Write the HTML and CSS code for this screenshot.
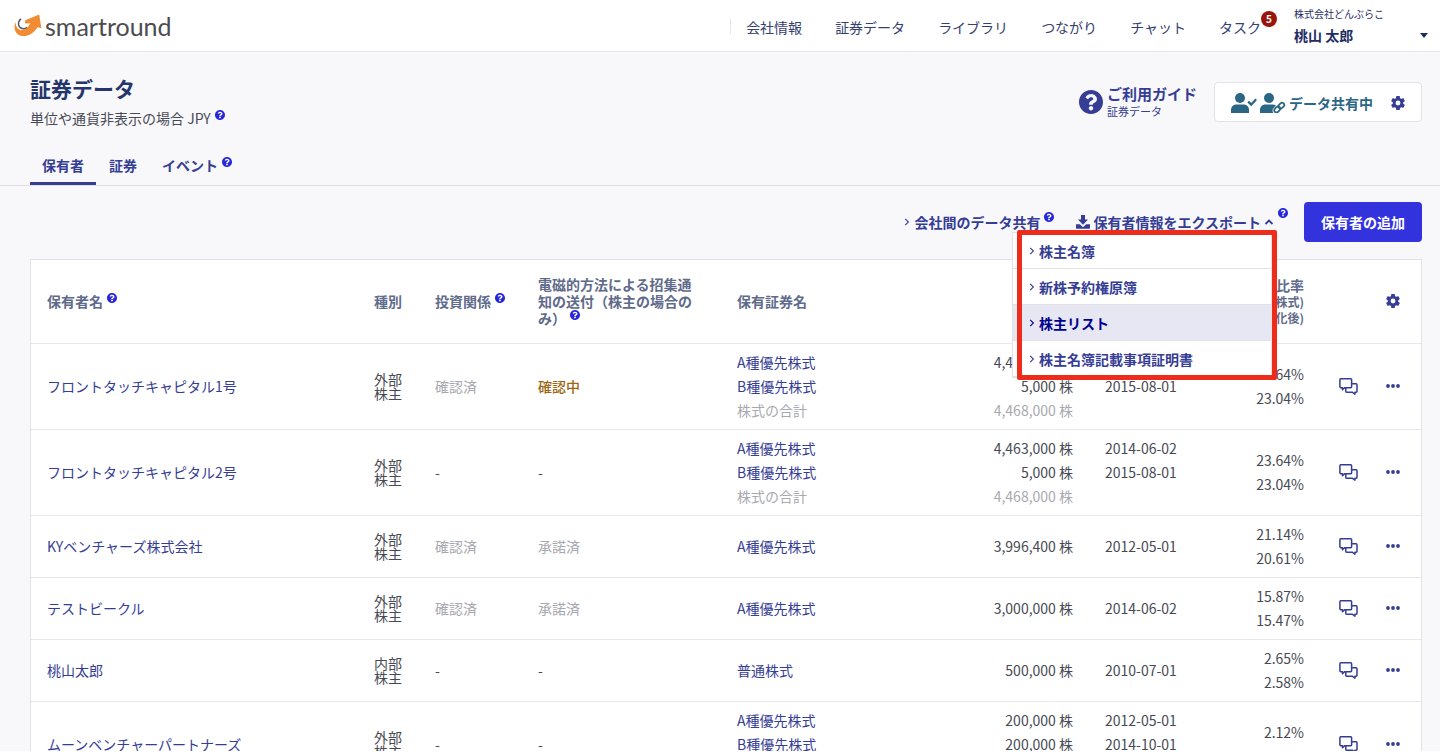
FILE: index.html
```html
<!doctype html>
<html lang="ja">
<head>
    <meta charset="utf-8">
    <title>証券データ | smartround</title>
    <meta name="viewport" content="width=device-width, initial-scale=1">
    <link rel="stylesheet" href="styles.css">
</head>
<body>
<svg class="sprite" xmlns="http://www.w3.org/2000/svg">
    <symbol id="i-help" viewBox="8 8 496 496">
        <path d="M504 256c0 136.997-111.043 248-248 248S8 392.997 8 256C8 119.083 119.043 8 256 8s248 111.083 248 248zM262.655 90c-54.497 0-89.255 22.957-116.549 63.758-3.536 5.286-2.353 12.415 2.715 16.258l34.699 26.31c5.205 3.947 12.621 3.008 16.665-2.122 17.864-22.658 30.113-35.797 57.303-35.797 20.429 0 45.698 13.148 45.698 32.958 0 14.976-12.363 22.667-32.534 33.976C247.128 238.528 216 254.941 216 296v4c0 6.627 5.373 12 12 12h56c6.627 0 12-5.373 12-12v-1.333c0-28.462 83.186-29.647 83.186-106.667 0-58.002-60.165-102-116.531-102zM256 338c-25.365 0-46 20.635-46 46 0 25.364 20.635 46 46 46s46-20.636 46-46c0-25.365-20.635-46-46-46z"/>
    </symbol>
    <symbol id="i-cog" viewBox="2 2 20 20">
        <path d="M12 15.5A3.5 3.5 0 0 1 8.5 12 3.5 3.5 0 0 1 12 8.5 3.5 3.5 0 0 1 15.5 12 3.5 3.5 0 0 1 12 15.5M19.43 12.97C19.47 12.65 19.5 12.33 19.5 12 19.5 11.67 19.47 11.34 19.43 11L21.54 9.37C21.73 9.22 21.78 8.95 21.66 8.73L19.66 5.27C19.54 5.05 19.27 4.96 19.05 5.05L16.56 6.05C16.04 5.66 15.5 5.32 14.87 5.07L14.5 2.42C14.46 2.18 14.25 2 14 2H10C9.75 2 9.54 2.18 9.5 2.42L9.13 5.07C8.5 5.32 7.96 5.66 7.44 6.05L4.95 5.05C4.73 4.96 4.46 5.05 4.34 5.27L2.34 8.73C2.21 8.95 2.27 9.22 2.46 9.37L4.57 11C4.53 11.34 4.5 11.67 4.5 12 4.5 12.33 4.53 12.65 4.57 12.97L2.46 14.63C2.27 14.78 2.21 15.05 2.34 15.27L4.34 18.73C4.46 18.95 4.73 19.03 4.95 18.95L7.44 17.94C7.96 18.34 8.5 18.68 9.13 18.93L9.5 21.58C9.54 21.82 9.75 22 10 22H14C14.25 22 14.46 21.82 14.5 21.58L14.87 18.93C15.5 18.67 16.04 18.34 16.56 17.94L19.05 18.95C19.27 19.03 19.54 18.95 19.66 18.73L21.66 15.27C21.78 15.05 21.73 14.78 21.54 14.63L19.43 12.97Z"/>
    </symbol>
    <symbol id="i-right" viewBox="0 0 6 8">
        <path d="M1.2 .8 4.4 4 1.2 7.2" fill="none" stroke="currentColor" stroke-width="1.1"/>
    </symbol>
    <symbol id="i-up" viewBox="0 0 10 6">
        <path d="M1.5 5 5 1.6 8.5 5" fill="none" stroke="currentColor" stroke-width="1.8"/>
    </symbol>
    <symbol id="i-download" viewBox="0 0 14 14">
        <path d="M5 0h4v4.600h3L7 9.800 2 4.600h3zM0 9.200h3.800L7 12.200l3.200-3H14V13a.8.8 0 0 1-.8.800H.8A.8.8 0 0 1 0 13z"/>
    </symbol>
    <symbol id="i-user-check" viewBox="0 0 26 20">
        <circle cx="9" cy="5" r="5"/>
        <path d="M0 20v-3.200c0-3.200 2.400-5.400 5.400-5.400h7.200c3 0 5.400 2.200 5.400 5.400V20z"/>
        <path d="m17.200 8.600 3 3 5-5.400" fill="none" stroke="currentColor" stroke-width="2.200"/>
    </symbol>
    <symbol id="i-user-link" viewBox="0 0 26 20">
        <circle cx="9" cy="5" r="5"/>
        <path d="M0 20v-3.200c0-3.200 2.400-5.400 5.400-5.400h7.200c1.300 0 2.400.4 3.300 1.100L13.600 15c-1.500 1.600-1.300 3.600-.2 5z"/>
        <g fill="none" stroke="currentColor" stroke-width="1.800">
            <rect x="14" y="14.300" width="6.400" height="4.400" rx="2.200" transform="rotate(-45 17.200 16.500)"/>
            <rect x="18.100" y="10.500" width="6.400" height="4.400" rx="2.200" transform="rotate(-45 21.300 12.700)"/>
        </g>
    </symbol>
    <symbol id="i-chat" viewBox="0 0 20 18">
        <g fill="none" stroke="currentColor" stroke-width="1.600" stroke-linejoin="round">
            <path d="M7 10.200H6L3.600 12.400V10.200H1.800a.9.900 0 0 1-.9-.9V1.800c0-.5.4-.9.900-.9h10.600c.5 0 .9.400.9.900v4.400"/>
            <path d="M13.300 6.200h4.800c.5 0 .9.400.9.900v7c0 .5-.4.900-.9.900h-1.300v2.200L14 15H8a.9.900 0 0 1-.9-.9v-3.900h5.300c.5 0 .9-.4.900-.9z"/>
        </g>
    </symbol>
    <symbol id="i-dots" viewBox="0 0 14 4">
        <circle cx="2" cy="2" r="1.900"/>
        <circle cx="7" cy="2" r="1.900"/>
        <circle cx="12" cy="2" r="1.900"/>
    </symbol>
</svg>

<div class="app">
    <header class="header">
        <a class="logo" href="#">
            <svg width="28" height="24" viewBox="0 0 28 24">
                <path d="M7 4.800C4.400 6.600 3.600 10.200 5.600 13c2 2.400 5.400 2.200 7.600.4" fill="none" stroke="#555" stroke-width="1.500"/>
                <path d="M1.600 8C-.8 13.600.8 20 6.600 21.800c6.600 1.400 13.400-2.600 17-8.600l3.800 1L25.200.6 11.200 6.200l-.2 3.400 5.200-.4c-2 4.200-5.800 7.400-9.600 6.800C3.400 15.400 1.600 12 1.600 8z" fill="#f28c33"/>
            </svg>
            <span>smartround</span>
        </a>
        <nav class="nav">
            <a href="#">会社情報</a>
            <a href="#">証券データ</a>
            <a href="#">ライブラリ</a>
            <a href="#">つながり</a>
            <a href="#">チャット</a>
            <a href="#">タスク<span class="badge">5</span></a>
        </nav>
        <button class="account" type="button">
            <span class="account-text">
                <span class="account-company">株式会社どんぶらこ</span>
                <span class="account-name">桃山 太郎</span>
            </span>
            <span class="account-caret"></span>
        </button>
    </header>

    <section class="page-head">
        <div class="page-title">
            <h1>証券データ</h1>
            <p>単位や通貨非表示の場合 JPY<svg class="help"><use href="#i-help"/></svg></p>
        </div>
        <a class="guide" href="#">
            <svg width="24" height="24"><use href="#i-help"/></svg>
            <span>
                <strong>ご利用ガイド</strong>
                <small>証券データ</small>
            </span>
        </a>
        <button class="share" type="button">
            <svg width="26" height="20"><use href="#i-user-check"/></svg>
            <svg width="26" height="20"><use href="#i-user-link"/></svg>
            <span>データ共有中</span>
            <svg class="cog" width="14" height="14"><use href="#i-cog"/></svg>
        </button>
    </section>

    <nav class="tabs">
        <a class="active" href="#">保有者</a>
        <a href="#">証券</a>
        <a href="#">イベント<svg class="help"><use href="#i-help"/></svg></a>
    </nav>

    <main class="content">
        <div class="toolbar">
            <a class="tool" href="#"><svg class="chevron"><use href="#i-right"/></svg>会社間のデータ共有<svg class="help"><use href="#i-help"/></svg></a>
            <div class="export">
                <button class="tool" type="button"><svg class="download"><use href="#i-download"/></svg>保有者情報をエクスポート<svg class="caret-up"><use href="#i-up"/></svg></button>
                <svg class="help"><use href="#i-help"/></svg>
                <div class="menu">
                    <a href="#"><svg class="chevron"><use href="#i-right"/></svg>株主名簿</a>
                    <a href="#"><svg class="chevron"><use href="#i-right"/></svg>新株予約権原簿</a>
                    <a class="selected" href="#"><svg class="chevron"><use href="#i-right"/></svg>株主リスト</a>
                    <a href="#"><svg class="chevron"><use href="#i-right"/></svg>株主名簿記載事項証明書</a>
                    <div class="menu-frame"></div>
                </div>
            </div>
            <button class="primary" type="button">保有者の追加</button>
        </div>

        <table class="holders">
            <colgroup>
                <col>
                <col class="col-type">
                <col class="col-relation">
                <col class="col-notice">
                <col class="col-security">
                <col class="col-shares">
                <col class="col-date">
                <col class="col-ratio">
                <col class="col-chat">
                <col class="col-more">
            </colgroup>
            <thead>
            <tr>
                <th>保有者名<svg class="help"><use href="#i-help"/></svg></th>
                <th>種別</th>
                <th>投資関係<svg class="help"><use href="#i-help"/></svg></th>
                <th class="notice">電磁的方法による招集通知の送付（株主の場合のみ）<svg class="help"><use href="#i-help"/></svg></th>
                <th>保有証券名</th>
                <th class="num">保有数</th>
                <th>取得日</th>
                <th class="num">保有比率<small>(発行済株式)</small><small>(完全希薄化後)</small></th>
                <th></th>
                <th class="more"><button type="button" aria-label="表示設定"><svg width="14" height="14"><use href="#i-cog"/></svg></button></th>
            </tr>
            </thead>
            <tbody>
            <tr>
                <td><a href="#">フロントタッチキャピタル1号</a></td>
                <td class="type">外部株主</td>
                <td class="muted">確認済</td>
                <td class="pending">確認中</td>
                <td class="lines"><a href="#">A種優先株式</a><a href="#">B種優先株式</a><span class="muted">株式の合計</span></td>
                <td class="lines num"><span>4,463,000 株</span><span>5,000 株</span><span class="muted">4,468,000 株</span></td>
                <td class="lines top"><span>2014-06-02</span><span>2015-08-01</span></td>
                <td class="lines num"><span>23.64%</span><span>23.04%</span></td>
                <td class="chat"><button type="button" aria-label="チャット"><svg width="19" height="17"><use href="#i-chat"/></svg></button></td>
                <td class="more"><button type="button" aria-label="メニュー"><svg width="14" height="4"><use href="#i-dots"/></svg></button></td>
            </tr>
            <tr>
                <td><a href="#">フロントタッチキャピタル2号</a></td>
                <td class="type">外部株主</td>
                <td>-</td>
                <td>-</td>
                <td class="lines"><a href="#">A種優先株式</a><a href="#">B種優先株式</a><span class="muted">株式の合計</span></td>
                <td class="lines num"><span>4,463,000 株</span><span>5,000 株</span><span class="muted">4,468,000 株</span></td>
                <td class="lines top"><span>2014-06-02</span><span>2015-08-01</span></td>
                <td class="lines num"><span>23.64%</span><span>23.04%</span></td>
                <td class="chat"><button type="button" aria-label="チャット"><svg width="19" height="17"><use href="#i-chat"/></svg></button></td>
                <td class="more"><button type="button" aria-label="メニュー"><svg width="14" height="4"><use href="#i-dots"/></svg></button></td>
            </tr>
            <tr>
                <td><a href="#">KYベンチャーズ株式会社</a></td>
                <td class="type">外部株主</td>
                <td class="muted">確認済</td>
                <td class="muted">承諾済</td>
                <td class="lines"><a href="#">A種優先株式</a></td>
                <td class="lines num"><span>3,996,400 株</span></td>
                <td class="lines"><span>2012-05-01</span></td>
                <td class="lines num"><span>21.14%</span><span>20.61%</span></td>
                <td class="chat"><button type="button" aria-label="チャット"><svg width="19" height="17"><use href="#i-chat"/></svg></button></td>
                <td class="more"><button type="button" aria-label="メニュー"><svg width="14" height="4"><use href="#i-dots"/></svg></button></td>
            </tr>
            <tr>
                <td><a href="#">テストビークル</a></td>
                <td class="type">外部株主</td>
                <td class="muted">確認済</td>
                <td class="muted">承諾済</td>
                <td class="lines"><a href="#">A種優先株式</a></td>
                <td class="lines num"><span>3,000,000 株</span></td>
                <td class="lines"><span>2014-06-02</span></td>
                <td class="lines num"><span>15.87%</span><span>15.47%</span></td>
                <td class="chat"><button type="button" aria-label="チャット"><svg width="19" height="17"><use href="#i-chat"/></svg></button></td>
                <td class="more"><button type="button" aria-label="メニュー"><svg width="14" height="4"><use href="#i-dots"/></svg></button></td>
            </tr>
            <tr>
                <td><a href="#">桃山太郎</a></td>
                <td class="type">内部株主</td>
                <td>-</td>
                <td>-</td>
                <td class="lines"><a href="#">普通株式</a></td>
                <td class="lines num"><span>500,000 株</span></td>
                <td class="lines"><span>2010-07-01</span></td>
                <td class="lines num"><span>2.65%</span><span>2.58%</span></td>
                <td class="chat"><button type="button" aria-label="チャット"><svg width="19" height="17"><use href="#i-chat"/></svg></button></td>
                <td class="more"><button type="button" aria-label="メニュー"><svg width="14" height="4"><use href="#i-dots"/></svg></button></td>
            </tr>
            <tr>
                <td><a href="#">ムーンベンチャーパートナーズ</a></td>
                <td class="type">外部株主</td>
                <td>-</td>
                <td>-</td>
                <td class="lines"><a href="#">A種優先株式</a><a href="#">B種優先株式</a><span class="muted">株式の合計</span></td>
                <td class="lines num"><span>200,000 株</span><span>200,000 株</span><span class="muted">400,000 株</span></td>
                <td class="lines top"><span>2012-05-01</span><span>2014-10-01</span></td>
                <td class="lines num"><span>2.12%</span><span>2.06%</span></td>
                <td class="chat"><button type="button" aria-label="チャット"><svg width="19" height="17"><use href="#i-chat"/></svg></button></td>
                <td class="more"><button type="button" aria-label="メニュー"><svg width="14" height="4"><use href="#i-dots"/></svg></button></td>
            </tr>
            </tbody>
        </table>
    </main>
</div>
</body>
</html>
```

FILE: styles.css
```css
* {
    box-sizing: border-box;
}

body {
    margin: 0;
    background: #fff;
    color: #474954;
    font-family: "Noto Sans CJK JP", "Noto Sans", sans-serif;
    font-size: 14px;
    line-height: 24px;
}

a {
    color: #353d94;
    text-decoration: none;
}

button {
    padding: 0;
    border: 0;
    background: none;
    color: #353d94;
    font: inherit;
    cursor: pointer;
}

svg {
    fill: currentColor;
}

.sprite {
    display: none;
}

.app {
    height: calc(100vh - 3px);
    overflow: hidden;
    background: #f8f8fb;
}

/* header */

.header {
    display: flex;
    align-items: center;
    height: 52px;
    padding: 0 12px 0 14px;
    background: #fff;
    border-bottom: 1px solid #e6e6e9;
}

.logo {
    display: flex;
    align-items: center;
    gap: 3px;
    margin-right: auto;
    color: #4c4c4e;
    font-family: Lato, sans-serif;
    font-size: 25px;
}

.nav {
    display: flex;
    gap: 33px;
    margin-right: 33px;
    padding: 2px 0 0 16px;
    background: linear-gradient(#e6e6e9, #e6e6e9) no-repeat 0 5px / 1px 16px;
}

.nav a {
    position: relative;
    color: #35406f;
}

.badge {
    position: absolute;
    top: -4px;
    left: 100%;
    width: 16px;
    border-radius: 8px;
    background: #99150b;
    color: #fff;
    font-size: 10px;
    font-weight: bold;
    line-height: 16px;
    text-align: center;
}

.account {
    display: flex;
    align-items: center;
    justify-content: space-between;
    width: 134px;
    color: #1f2d63;
    text-align: left;
}

.account-text {
    display: flex;
    flex-direction: column;
    padding-bottom: 2px;
}

.account-company {
    font-size: 10px;
    line-height: 20px;
}

.account-name {
    font-weight: bold;
    line-height: 22px;
}

.account-caret {
    margin-top: 20px;
    border: 4px solid transparent;
    border-top: 5px solid #1f2d63;
    border-bottom: 0;
}

/* page head */

.page-head {
    display: flex;
    align-items: center;
    padding: 20px 18px 0 30px;
}

.page-title {
    margin-right: auto;
}

.page-title h1 {
    margin: 0;
    color: #26366b;
    font-size: 21px;
    line-height: 32px;
}

.page-title p {
    margin: 0;
    line-height: 28px;
}

.help {
    width: 10px;
    height: 10px;
    margin-left: 4px;
    color: #2727dc;
    vertical-align: 4px;
}

.guide {
    display: flex;
    align-items: center;
    gap: 4px;
    margin-right: 17px;
}

.guide strong,
.guide small {
    display: block;
}

.guide strong {
    font-size: 15px;
    line-height: 18px;
}

.guide small {
    font-size: 11px;
    line-height: 16px;
}

.share {
    display: flex;
    align-items: center;
    gap: 3px;
    height: 40px;
    padding: 1px 16px 0;
    border: 1px solid #e2e2e6;
    border-radius: 4px;
    background: #fff;
    color: #2b6685;
    font-weight: bold;
}

.share .cog {
    margin-left: 15px;
    color: #353d94;
}

/* tabs */

.tabs {
    display: flex;
    gap: 1px;
    margin-top: 15px;
    padding: 0 30px;
    border-bottom: 1px solid #e0e0e5;
}

.tabs a {
    padding: 6px 12px 5px;
    border-bottom: 3px solid transparent;
    font-weight: bold;
}

.tabs .active {
    border-color: #353d94;
}

/* toolbar */

.content {
    padding: 16px 18px 0 30px;
}

.toolbar {
    display: flex;
    align-items: center;
    justify-content: flex-end;
    margin-bottom: 17px;
}

.tool {
    display: flex;
    align-items: center;
    font-weight: bold;
    white-space: nowrap;
}

.toolbar .help {
    margin-bottom: 10px;
}

.chevron {
    width: 6px;
    height: 8px;
    margin-right: 4px;
}

.download {
    width: 14px;
    height: 14px;
    margin-right: 3px;
}

.caret-up {
    width: 10px;
    height: 6px;
    margin-left: 3px;
}

.export {
    position: relative;
    display: flex;
    align-items: center;
    margin: 0 16px 0 22px;
}

.export > .help {
    margin-bottom: 18px;
}

.primary {
    height: 40px;
    padding: 0 17px;
    border-radius: 4px;
    background: #3333dd;
    color: #fff;
    font-weight: bold;
}

.menu {
    position: absolute;
    top: 24px;
    right: 16px;
    width: 260px;
    border: 1px solid #e2e2e6;
    background: #fff;
}

.menu a {
    display: flex;
    align-items: center;
    height: 36px;
    padding-left: 16px;
    border-bottom: 1px solid #e2e2e6;
    font-weight: bold;
}

.menu .selected {
    background: #e7e6f3;
    color: #00008f;
}

.menu-frame {
    position: absolute;
    top: -3px;
    right: -6px;
    bottom: -3px;
    left: 4px;
    border: 5px solid #ee2c1c;
    border-radius: 2px;
    pointer-events: none;
}

/* table */

.holders {
    width: 100%;
    table-layout: fixed;
    border: 1px solid #e2e2e6;
    border-spacing: 0;
    background: #fff;
}

.col-type {
    width: 61px;
}

.col-relation {
    width: 103px;
}

.col-notice {
    width: 199px;
}

.col-security {
    width: 228px;
}

.col-shares {
    width: 140px;
}

.col-date {
    width: 105px;
}

.col-ratio {
    width: 126px;
}

.col-chat {
    width: 56px;
}

.col-more {
    width: 45px;
}

.holders th,
.holders td {
    padding: 6px 16px 7px;
    border-bottom: 1px solid #e8e8eb;
    text-align: left;
}

.holders tr:last-child td {
    border-bottom: 0;
}

.holders th {
    height: 84px;
    color: #5f6b8b;
    line-height: 17px;
}

.holders th.notice {
    padding-right: 24px;
}

.holders th small {
    display: block;
    font-size: 12px;
    line-height: 16px;
    white-space: nowrap;
}

.holders .num {
    text-align: right;
}

.holders .top {
    vertical-align: top;
}

.holders .type {
    line-height: 14px;
}

.lines > * {
    display: block;
}

.muted {
    color: #a8a9b0;
}

.pending {
    color: #9c6610;
    font-weight: 500;
}

.holders .chat,
.holders .more {
    padding-right: 0;
    padding-left: 0;
    text-align: center;
}

.holders .more {
    padding-right: 12px;
}

.chat button,
.more button {
    display: block;
    margin: 0 auto;
}

.chat svg,
.more svg {
    display: block;
}
```
